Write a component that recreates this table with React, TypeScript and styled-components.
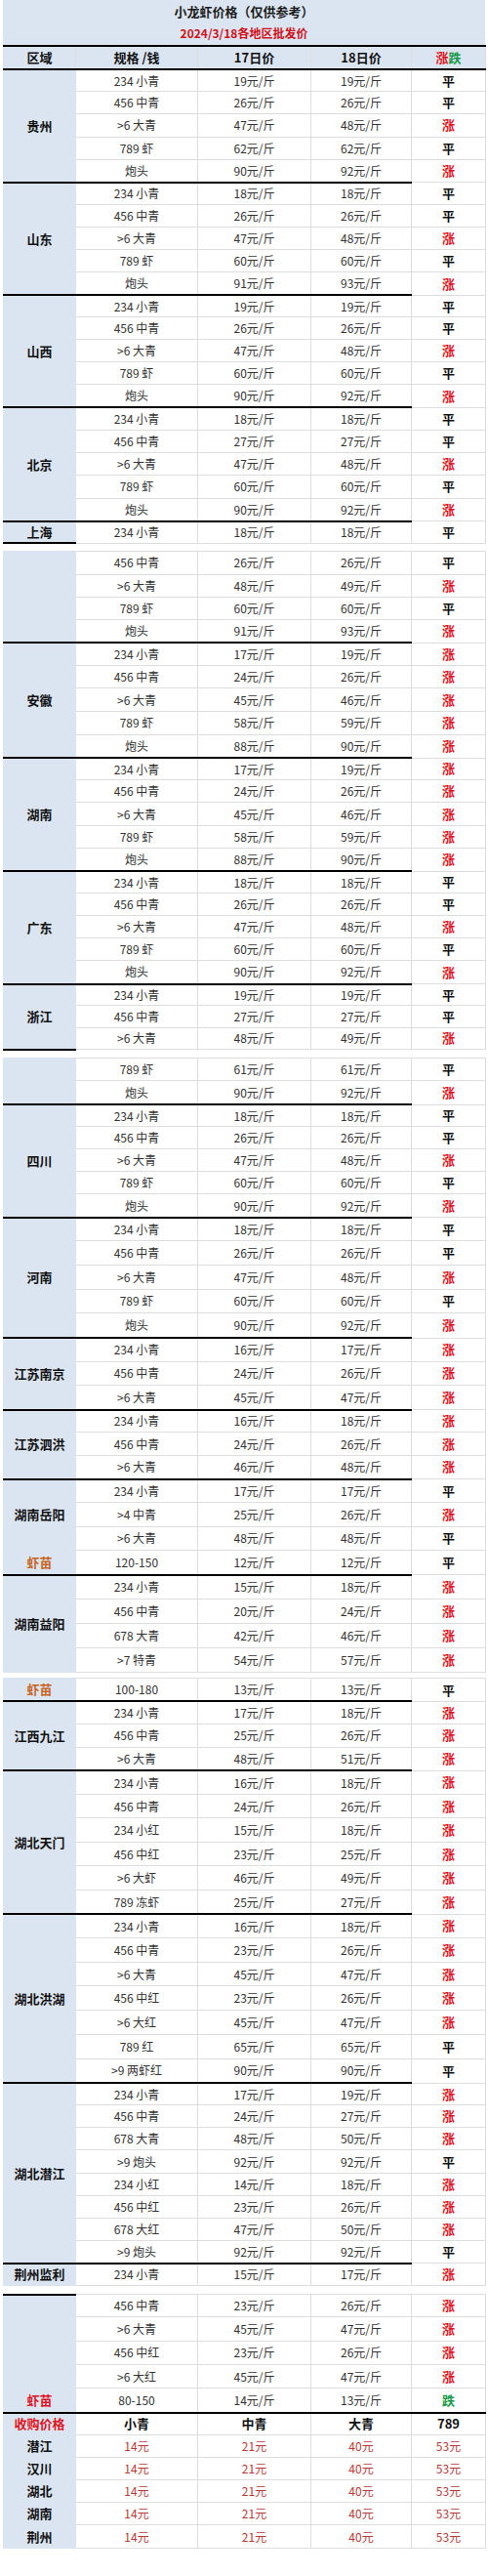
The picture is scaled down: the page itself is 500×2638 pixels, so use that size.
import React from 'react';
import styled, { createGlobalStyle } from 'styled-components';

type Trend = '涨' | '平' | '跌';
type Row = [string, number, number, Trend];
type Tone = 'dark' | 'orange' | 'red';

interface Label {
  text: string;
  span: number;
  tone?: Tone;
}

interface Group {
  h: number;
  labels: Label[];
  rows: Row[];
  cont?: boolean;
  regionTop?: boolean;
  closeRegion?: boolean;
}

interface Segment {
  gap: number;
  groups: Group[];
}

const GlobalStyle = createGlobalStyle`
  html, body {
    margin: 0;
    padding: 0;
    background: #ffffff;
  }
  body {
    font-family: "Noto Sans CJK SC", "Liberation Sans", sans-serif;
    color: #222;
  }
`;

const Page = styled.div`
  width: 500px;
  height: 2638px;
  padding: 0 3px;
  box-sizing: border-box;
  overflow: hidden;
`;

const TitleBand = styled.div`
  height: 46px;
  background: #dbe5f1;
  display: flex;
  flex-direction: column;
  align-items: center;
  justify-content: center;
`;

const Title = styled.div`
  height: 22px;
  line-height: 22px;
  font-size: 13px;
  font-weight: 700;
  color: #1a1a1a;
`;

const SubTitle = styled.div`
  height: 22px;
  line-height: 22px;
  font-size: 12px;
  font-weight: 700;
  color: #d0101a;
`;

const Table = styled.table<{ $gap: number }>`
  width: 494px;
  table-layout: fixed;
  border-collapse: collapse;
  margin-top: ${(p) => p.$gap}px;
`;

const BLUE = '#dbe5f1';
const GRID = '#dddddd';

// height = row pitch minus the width of the row's top border
const Cell = styled.td<{
  $h: number;
  $rowThick?: boolean;
  $region?: boolean;
  $thick?: boolean;
  $thickBottom?: boolean;
  $head?: boolean;
}>`
  height: ${(p) => p.$h - (p.$rowThick ? 2 : 1)}px;
  padding: 0;
  text-align: center;
  vertical-align: middle;
  font-size: 12px;
  line-height: 14px;
  color: #333;
  white-space: nowrap;
  background: ${(p) => (p.$region || p.$head ? BLUE : '#ffffff')};
  border: 1px solid ${(p) => (p.$region ? BLUE : GRID)};
  ${(p) => (p.$thick ? 'border-top: 2px solid #000;' : '')}
  ${(p) => (p.$thickBottom ? 'border-bottom: 2px solid #000;' : '')}
`;

const HeadText = styled.span`
  font-size: 13px;
  font-weight: 700;
  color: #111;
`;

const RegionText = styled.span<{ $tone?: Tone }>`
  font-size: 13px;
  font-weight: 700;
  color: ${(p) =>
    p.$tone === 'orange' ? '#c8641e' : p.$tone === 'red' ? '#e0141e' : '#111'};
`;

const TrendText = styled.span<{ $t: Trend }>`
  font-size: 13px;
  font-weight: 700;
  color: ${(p) => (p.$t === '涨' ? '#e3101a' : p.$t === '跌' ? '#139a45' : '#111')};
`;

const BuyPrice = styled.span`
  font-size: 12px;
  color: #b83a3a;
`;

const r = (spec: string, a: number, b: number, t: Trend): Row => [spec, a, b, t];

const standard = (q: number[], d: number[]): Row[] => [
  r('234 小青', q[0], d[0], q[0] === d[0] ? '平' : '涨'),
  r('456 中青', q[1], d[1], q[1] === d[1] ? '平' : '涨'),
  r('>6 大青', q[2], d[2], q[2] === d[2] ? '平' : '涨'),
  r('789 虾', q[3], d[3], q[3] === d[3] ? '平' : '涨'),
  r('炮头', q[4], d[4], q[4] === d[4] ? '平' : '涨'),
];

const segments: Segment[] = [
  {
    gap: 0,
    groups: [
      { h: 23.2, labels: [{ text: '贵州', span: 5 }], rows: standard([19, 26, 47, 62, 90], [19, 26, 48, 62, 92]) },
      { h: 23.1, labels: [{ text: '山东', span: 5 }], rows: standard([18, 26, 47, 60, 91], [18, 26, 48, 60, 93]) },
      { h: 23, labels: [{ text: '山西', span: 5 }], rows: standard([19, 26, 47, 60, 90], [19, 26, 48, 60, 92]) },
      { h: 23.3, labels: [{ text: '北京', span: 5 }], rows: standard([18, 27, 47, 60, 90], [18, 27, 48, 60, 92]) },
      { h: 22.5, labels: [{ text: '上海', span: 1 }], rows: [r('234 小青', 18, 18, '平')], closeRegion: true },
    ],
  },
  {
    gap: 7,
    groups: [
      {
        h: 23.2,
        cont: true,
        labels: [{ text: '', span: 4 }],
        rows: [
          r('456 中青', 26, 26, '平'),
          r('>6 大青', 48, 49, '涨'),
          r('789 虾', 60, 60, '平'),
          r('炮头', 91, 93, '涨'),
        ],
      },
      { h: 23.6, labels: [{ text: '安徽', span: 5 }], rows: standard([17, 24, 45, 58, 88], [19, 26, 46, 59, 90]) },
      { h: 23.2, labels: [{ text: '湖南', span: 5 }], rows: standard([17, 24, 45, 58, 88], [19, 26, 46, 59, 90]) },
      { h: 23.1, labels: [{ text: '广东', span: 5 }], rows: standard([18, 26, 47, 60, 90], [18, 26, 48, 60, 92]) },
      {
        h: 22.5,
        labels: [{ text: '浙江', span: 3 }],
        rows: [r('234 小青', 19, 19, '平'), r('456 中青', 27, 27, '平'), r('>6 大青', 48, 49, '涨')],
        closeRegion: true,
      },
    ],
  },
  {
    gap: 7,
    groups: [
      {
        h: 23.8,
        cont: true,
        labels: [{ text: '', span: 2 }],
        rows: [r('789 虾', 61, 61, '平'), r('炮头', 90, 92, '涨')],
      },
      { h: 23.1, labels: [{ text: '四川', span: 5 }], rows: standard([18, 26, 47, 60, 90], [18, 26, 48, 60, 92]) },
      { h: 24.7, labels: [{ text: '河南', span: 5 }], rows: standard([18, 26, 47, 60, 90], [18, 26, 48, 60, 92]) },
      {
        h: 24.5,
        labels: [{ text: '江苏南京', span: 3 }],
        rows: [r('234 小青', 16, 17, '涨'), r('456 中青', 24, 26, '涨'), r('>6 大青', 45, 47, '涨')],
      },
      {
        h: 23.7,
        labels: [{ text: '江苏泗洪', span: 3 }],
        rows: [r('234 小青', 16, 18, '涨'), r('456 中青', 24, 26, '涨'), r('>6 大青', 46, 48, '涨')],
      },
      {
        h: 24.5,
        labels: [
          { text: '湖南岳阳', span: 3 },
          { text: '虾苗', span: 1, tone: 'orange' },
        ],
        rows: [
          r('234 小青', 17, 17, '平'),
          r('>4 中青', 25, 26, '涨'),
          r('>6 大青', 48, 48, '平'),
          r('120-150', 12, 12, '平'),
        ],
      },
      {
        h: 25.2,
        labels: [{ text: '湖南益阳', span: 4 }],
        rows: [
          r('234 小青', 15, 18, '涨'),
          r('456 中青', 20, 24, '涨'),
          r('678 大青', 42, 46, '涨'),
          r('>7 特青', 54, 57, '涨'),
        ],
      },
    ],
  },
  {
    gap: 5,
    groups: [
      {
        h: 23,
        cont: true,
        labels: [{ text: '虾苗', span: 1, tone: 'orange' }],
        rows: [r('100-180', 13, 13, '平')],
      },
      {
        h: 23.7,
        labels: [{ text: '江西九江', span: 3 }],
        rows: [r('234 小青', 17, 18, '涨'), r('456 中青', 25, 26, '涨'), r('>6 大青', 48, 51, '涨')],
      },
      {
        h: 24.5,
        labels: [{ text: '湖北天门', span: 6 }],
        rows: [
          r('234 小青', 16, 18, '涨'),
          r('456 中青', 24, 26, '涨'),
          r('234 小红', 15, 18, '涨'),
          r('456 中红', 23, 25, '涨'),
          r('>6 大虾', 46, 49, '涨'),
          r('789 冻虾', 25, 27, '涨'),
        ],
      },
      {
        h: 24.7,
        labels: [{ text: '湖北洪湖', span: 7 }],
        rows: [
          r('234 小青', 16, 18, '涨'),
          r('456 中青', 23, 26, '涨'),
          r('>6 大青', 45, 47, '涨'),
          r('456 中红', 23, 26, '涨'),
          r('>6 大红', 45, 47, '涨'),
          r('789 红', 65, 65, '平'),
          r('>9 两虾红', 90, 90, '平'),
        ],
      },
      {
        h: 23.1,
        labels: [{ text: '湖北潜江', span: 8 }],
        rows: [
          r('234 小青', 17, 19, '涨'),
          r('456 中青', 24, 27, '涨'),
          r('678 大青', 48, 50, '涨'),
          r('>9 炮头', 92, 92, '平'),
          r('234 小红', 14, 18, '涨'),
          r('456 中红', 23, 26, '涨'),
          r('678 大红', 47, 50, '涨'),
          r('>9 炮头', 92, 92, '平'),
        ],
      },
      { h: 22.6, labels: [{ text: '荆州监利', span: 1 }], rows: [r('234 小青', 15, 17, '涨')] },
    ],
  },
  {
    gap: 8,
    groups: [
      {
        h: 24.3,
        cont: true,
        regionTop: true,
        labels: [
          { text: '', span: 4 },
          { text: '虾苗', span: 1, tone: 'red' },
        ],
        rows: [
          r('456 中青', 23, 26, '涨'),
          r('>6 大青', 45, 47, '涨'),
          r('456 中红', 23, 26, '涨'),
          r('>6 大红', 45, 47, '涨'),
          r('80-150', 14, 13, '跌'),
        ],
      },
    ],
  },
];

const buyPlaces = ['潜江', '汉川', '湖北', '湖南', '荆州'];
const buyPrices = [14, 21, 40, 53];
const BUY_H = 23.2;

const Cols = () => (
  <colgroup>
    <col style={{ width: 74 }} />
    <col style={{ width: 125 }} />
    <col style={{ width: 116 }} />
    <col style={{ width: 103 }} />
    <col style={{ width: 76 }} />
  </colgroup>
);

const GroupRows: React.FC<{ group: Group; gi: number }> = ({ group, gi }) => {
  const h = group.h;
  const starts: Record<number, Label> = {};
  let offset = 0;
  group.labels.forEach((l) => {
    starts[offset] = l;
    offset += l.span;
  });
  const topLine = !group.cont;

  return (
    <>
      {group.rows.map((row, i) => {
        const label = starts[i];
        const first = i === 0;
        const rowThick = first && (topLine || !!group.regionTop);
        const isLastLabel = label && i + label.span === group.rows.length;
        return (
          <tr key={`${gi}-${i}`}>
            {label && (
              <Cell
                $h={h}
                $rowThick={rowThick}
                $region
                rowSpan={label.span}
                $thick={rowThick}
                $thickBottom={isLastLabel && group.closeRegion}
              >
                <RegionText $tone={label.tone}>{label.text}</RegionText>
              </Cell>
            )}
            <Cell $h={h} $rowThick={rowThick} $thick={first && topLine}>{row[0]}</Cell>
            <Cell $h={h} $rowThick={rowThick} $thick={first && topLine}>{row[1]}元/斤</Cell>
            <Cell $h={h} $rowThick={rowThick} $thick={first && topLine}>{row[2]}元/斤</Cell>
            <Cell $h={h} $rowThick={rowThick}>
              <TrendText $t={row[3]}>{row[3]}</TrendText>
            </Cell>
          </tr>
        );
      })}
    </>
  );
};

export default function App() {
  return (
    <Page>
      <GlobalStyle />
      <TitleBand>
        <Title>小龙虾价格（仅供参考）</Title>
        <SubTitle>2024/3/18各地区批发价</SubTitle>
      </TitleBand>
      {segments.map((seg, si) => {
        const last = si === segments.length - 1;
        return (
          <Table key={si} $gap={seg.gap}>
            <Cols />
            <tbody>
              {si === 0 && (
                <tr>
                  <Cell $h={24} $rowThick $head $thick><HeadText>区域</HeadText></Cell>
                  <Cell $h={24} $rowThick $head $thick><HeadText>规格 /钱</HeadText></Cell>
                  <Cell $h={24} $rowThick $head $thick><HeadText>17日价</HeadText></Cell>
                  <Cell $h={24} $rowThick $head $thick><HeadText>18日价</HeadText></Cell>
                  <Cell $h={24} $rowThick $head $thick $thickBottom>
                    <TrendText $t="涨">涨</TrendText>
                    <TrendText $t="跌">跌</TrendText>
                  </Cell>
                </tr>
              )}
              {seg.groups.map((g, gi) => (
                <GroupRows key={gi} group={g} gi={gi} />
              ))}
              {last && (
                <>
                  <tr>
                    <Cell $h={BUY_H} $rowThick $region $thick>
                      <RegionText $tone="red">收购价格</RegionText>
                    </Cell>
                    {['小青', '中青', '大青', '789'].map((k) => (
                      <Cell key={k} $h={BUY_H} $rowThick $thick>
                        <HeadText>{k}</HeadText>
                      </Cell>
                    ))}
                  </tr>
                  {buyPlaces.map((p) => (
                    <tr key={p}>
                      <Cell $h={BUY_H} $region>
                        <RegionText>{p}</RegionText>
                      </Cell>
                      {buyPrices.map((v) => (
                        <Cell key={v} $h={BUY_H}>
                          <BuyPrice>{v}元</BuyPrice>
                        </Cell>
                      ))}
                    </tr>
                  ))}
                </>
              )}
            </tbody>
          </Table>
        );
      })}
    </Page>
  );
}
